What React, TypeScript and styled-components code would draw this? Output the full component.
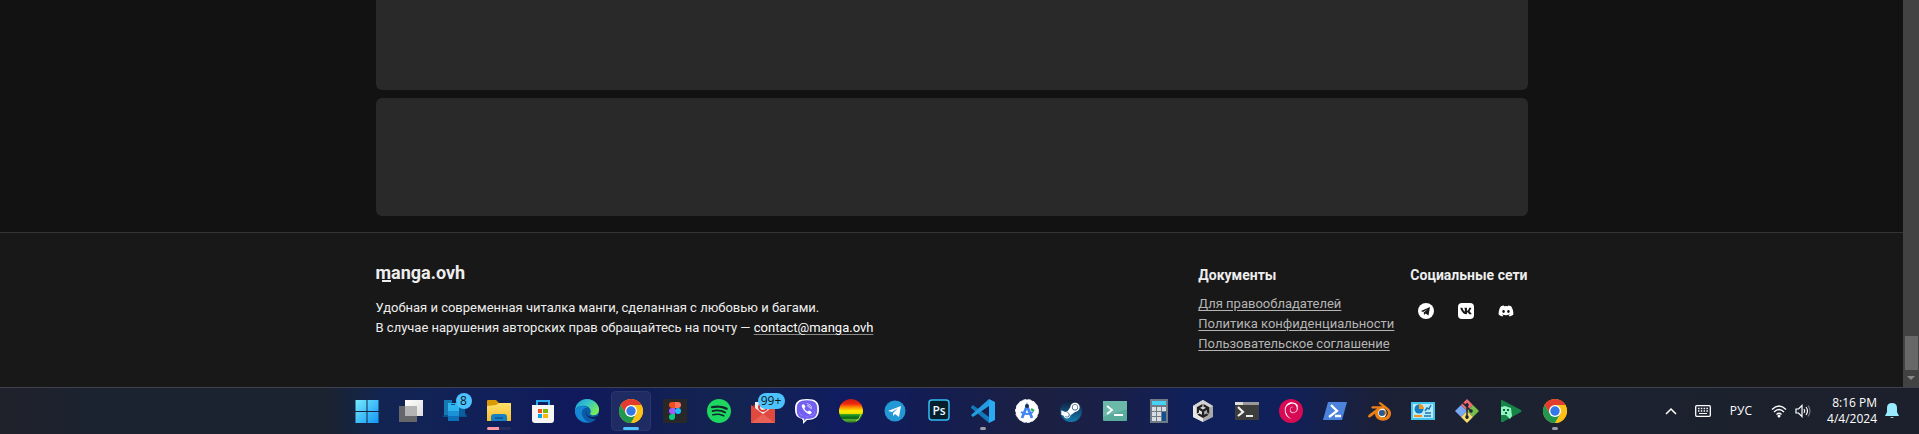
import React from 'react';
import styled, { createGlobalStyle } from 'styled-components';
import { FaDiscord, FaSteamSymbol, FaVk, FaViber } from 'react-icons/fa';
import { SiBlender, SiDebian, SiSpotify, SiUnity } from 'react-icons/si';

const GlobalStyle = createGlobalStyle`
  * { box-sizing: border-box; }
  html, body, #root { height: 100%; }
  body { margin: 0; background: #121212; color: #eeeeee; overflow: hidden; font-family: Roboto, sans-serif; }
  a { color: inherit; }
  svg { display: block; }
`;

const Screen = styled.div`
  display: flex;
  flex-direction: column;
  min-height: 100vh;
`;

const Viewport = styled.div`
  display: flex;
  flex: 1;
`;

const Page = styled.div`
  display: flex;
  flex: 1;
  flex-direction: column;
`;

const Container = styled.div`
  width: 100%;
  max-width: 1200px;
  margin: 0 auto;
  padding: 0 24px;
`;

const CardList = styled(Container).attrs({ as: 'main' })`
  display: flex;
  flex-direction: column;
  gap: 8px;
  padding-bottom: 16px;
`;

const Card = styled.section<{ $cut?: boolean }>`
  height: ${p => (p.$cut ? 90 : 118)}px;
  border-radius: ${p => (p.$cut ? '0 0 6px 6px' : '6px')};
  background: #292929;
`;

const Footer = styled.footer`
  flex: 1;
  border-top: 1px solid #333333;
  background: #181818;
`;

const FooterInner = styled(Container)`
  display: flex;
  justify-content: space-between;
  padding-top: 28px;
`;

const About = styled.div`
  font-size: 13px;
  line-height: 20px;
`;

const Brand = styled.h2`
  margin: 0 0 13px;
  font-size: 18px;
  line-height: 24px;
  font-weight: 700;
`;

const BrandMark = styled.span`
  position: relative;
  &::after {
    content: '';
    position: absolute;
    left: 6px;
    bottom: 1px;
    width: 9px;
    height: 2px;
    background: #eeeeee;
  }
`;

const Text = styled.p`
  margin: 0;
`;

const Columns = styled.div`
  display: flex;
  gap: 16px;
`;

const Column = styled.section``;

const ColumnTitle = styled.h3`
  margin: 4px 0 9px;
  font-size: 14px;
  line-height: 20px;
  font-weight: 700;
`;

const Links = styled.nav`
  display: flex;
  flex-direction: column;
  align-items: flex-start;
  font-size: 13px;
  line-height: 20px;
  color: #b4b4b4;
`;

const DocLink = styled.a`
  text-underline-offset: 2px;
`;

const MailLink = styled.a`
  color: #ffffff;
  text-decoration-color: #888888;
  text-underline-offset: 2px;
`;

const Socials = styled.div`
  display: flex;
  gap: 8px;
`;

const SocialLink = styled.a`
  display: flex;
  align-items: center;
  justify-content: center;
  width: 32px;
  height: 34px;
  color: #ffffff;
`;

const Scrollbar = styled.div`
  display: flex;
  flex-direction: column;
  justify-content: flex-end;
  align-items: center;
  gap: 6px;
  width: 16px;
  padding-bottom: 7px;
  background: #424242;
`;

const Thumb = styled.div`
  width: 13px;
  height: 34px;
  background: #686868;
`;

const Arrow = styled.div`
  border: 4px solid transparent;
  border-top-color: #888888;
  border-bottom: 0;
`;

const Taskbar = styled.div`
  display: grid;
  grid-template-columns: 1fr auto 1fr;
  height: 47px;
  border-top: 1px solid #40434e;
  background: linear-gradient(90deg, #20212b 0%, #1b2330 5%, #1b2330 17%, #122452 20%, #11205a 26%, #10195c 30%, #132450 38%, #101c60 44%, #141d50 49%, #1b2042 54%, #191f48 58%, #10205a 62%, #10205a 67%, #1c2036 72%, #1c2230 80%, #1c202c 100%);
`;

const Apps = styled.div`
  grid-column: 2;
  display: flex;
  align-items: center;
  gap: 4px;
  padding-left: 2px;
`;

const AppButton = styled.button<{ $active?: boolean }>`
  position: relative;
  display: flex;
  align-items: center;
  justify-content: center;
  width: 40px;
  height: 40px;
  padding: 0;
  border: 1px solid ${p => (p.$active ? '#29356b' : 'transparent')};
  border-radius: 4px;
  background: ${p => (p.$active ? '#1f2b63' : 'transparent')};
`;

const Badge = styled.span<{ $wide: boolean }>`
  position: absolute;
  top: 1px;
  right: ${p => (p.$wide ? -3 : 2)}px;
  width: ${p => (p.$wide ? 27 : 16)}px;
  border-radius: 8px;
  background: #4cc2ff;
  color: #101820;
  font: 12px/16px "Open Sans", sans-serif;
  text-align: center;
`;

const Running = styled.span<{ $kind: 'active' | 'idle' | 'progress' }>`
  position: absolute;
  bottom: 0;
  width: ${p => ({ active: 16, idle: 6, progress: 24 })[p.$kind]}px;
  height: 3px;
  border-radius: 2px;
  background: ${p => ({ active: '#4cc2ff', idle: '#9a9ca8', progress: 'linear-gradient(90deg, #ff99a4 50%, #232c5c 50%)' })[p.$kind]};
`;

const Tray = styled.div`
  grid-column: 3;
  display: flex;
  align-items: center;
  justify-content: flex-end;
  padding-right: 20px;
  color: #ffffff;
  font: 12px/16px "Open Sans", sans-serif;
`;

const TrayButton = styled.button<{ $gap: number }>`
  display: flex;
  gap: 8px;
  margin: 0 ${p => p.$gap}px 0 0;
  padding: 0;
  border: 0;
  background: none;
  color: inherit;
  font: inherit;
  text-align: right;
`;

const Clock = styled.time`
  white-space: pre-line;
`;

const ICONS: Record<string, React.ReactNode> = {
  start: <><defs><linearGradient id="st" x2="1" y2="1"><stop stopColor="#75eaff" /><stop offset="1" stopColor="#1296f5" /></linearGradient></defs><path fill="url(#st)" d="M.5 1h11v11H.5zM12.500 1h11v11h-11zM.5 13h11v11H.5zM12.500 13h11v11h-11z" /></>,
  tasks: <><defs><linearGradient id="tk" x2="1" y2="1"><stop stopColor="#fff" /><stop offset="1" stopColor="#ddd" /></linearGradient></defs><path fill="url(#tk)" d="M6 1h18v16H6z" /><path fill="#6c6c6c" opacity=".95" d="M0 7h18v16H0z" /><path fill="#b4b4b4" d="M6 7h12v10H6z" /></>,
  phone: <><path fill="#07538f" d="M0 17l2-3h20l2 3v1H0z" /><path fill="#1677b5" d="M1 1h8v15H1z" /><path fill="#0b5d9e" d="M15 6h7v11h-7z" /><path fill="#2fb4ee" d="M5 4h11v8H5z" /><path fill="#1b92d6" d="M5 12h11v5H5z" /><path fill="#0f6fb9" d="M5 17h11v5H5z" /><path stroke="#0b4a80" d="M8 5.500h4" /></>,
  folder: <><path fill="#d99a06" d="M0 2q0-1 1-1h8l3 3v5H0z" /><defs><linearGradient id="fo" x2="0" y2="1"><stop stopColor="#ffe16b" /><stop offset="1" stopColor="#f9bd2b" /></linearGradient></defs><path fill="url(#fo)" d="M0 7l9-1 3-2h12v18H0z" /><path fill="#1a80c4" d="M4 22v-4q0-3 3-3h10q3 0 3 3v4z" /><path fill="#0a5f9f" d="M8 18h8v2H8z" /></>,
  store: <><path fill="none" stroke="#29aaf0" strokeWidth="2" d="M6 7V2h12v5" /><path fill="#f5f5f5" d="M1 6h22v15q0 3-3 3H4q-3 0-3-3z" /><path fill="#f25022" d="M7 10h4v4H7z" /><path fill="#7fba00" d="M12 10h5v4h-5z" /><path fill="#00a4ef" d="M7 15h4v4H7z" /><path fill="#ffb900" d="M12 15h5v4h-5z" /></>,
  edge: <><defs><linearGradient id="ed" x2="1" y2=".6"><stop stopColor="#1e98df" /><stop offset=".5" stopColor="#35c4c9" /><stop offset="1" stopColor="#78ed57" /></linearGradient></defs><circle cx="12" cy="12" r="12" fill="#0b5ca8" /><path fill="url(#ed)" d="M0 11C1 4 6 0 12 0c8 0 13 7 12 12-1 5-7 5-9 3 2-3 0-7-4-8C6 6 2 7 0 11z" /><path fill="#1587d4" d="M0 11c3-5 10-5 13-2-5-1-8 4-5 9 2 4 5 5 7 5C6 25-1 18 0 11z" /><path fill="#10205a" d="M12 11c-3 4 2 9 10 6l3-1v3l-3 1C14 21 8 15 12 11z" /></>,
  chrome: <><circle cx="12" cy="12" r="12" fill="#fbc116" /><path fill="#e33b2e" d="M1.600 6a12 12 0 0 1 20.800 0H12L7 15z" /><path fill="#21984f" d="M1.600 6a12 12 0 0 0 10.400 18l5.200-9L12 17l-5-2z" /><path fill="#fbc116" d="M12 6h10.400A12 12 0 0 1 12 24l5.200-9z" /><circle cx="12" cy="12" r="6" fill="#fff" /><circle cx="12" cy="12" r="4.700" fill="#3478e8" /></>,
  figma: <><rect width="24" height="24" rx="1" fill="#282828" /><path fill="#f24e1e" d="M12 3H9a3 3 0 0 0 0 6h3z" /><path fill="#ff7262" d="M12 3h3a3 3 0 0 1 0 6h-3z" /><path fill="#a259ff" d="M12 9H9a3 3 0 0 0 0 6h3z" /><circle cx="15" cy="12" r="3" fill="#1abcfe" /><path fill="#0acf83" d="M12 15H9a3 3 0 1 0 3 3z" /></>,
  spotify: <><circle cx="12" cy="12" r="11" fill="#10262c" /><SiSpotify size={24} color="#1ed760" /></>,
  mail: <><path fill="#ba2d29" d="M0 8l12-8 12 8v14H0z" /><path fill="#eee" d="M4 3h16v13H4z" /><circle cx="12" cy="8" r="4" fill="none" stroke="#d33" strokeWidth="2" /><path fill="#df493e" d="M0 6l12 9 12-9v18H0z" /><path fill="#f3776b" d="M0 24l12-9 12 9z" opacity=".5" /></>,
  viber: <><path fill="#fff" d="M12 0c9 0 12 3 12 10s-3 11-12 11l-4 4v-5C2 19 0 16 0 10 0 3 3 0 12 0z" /><path fill="#7360f2" d="M12 2c7 0 10 2 10 8s-3 9-10 9l-3 3v-4c-5-1-7-3-7-8 0-6 3-8 10-8z" /><FaViber x="2" y="1" size={20} color="#fff" /><path fill="none" stroke="#7360f2" strokeWidth="2.500" d="M12 2.500c7 0 9 2 9 8s-2 8-9 8-9-2-9-8 2-8 9-8z" /></>,
  rainbow: <><defs><linearGradient id="rb" x2="0" y2="1"><stop stopColor="#c51c13" /><stop offset=".2" stopColor="#f02510" /><stop offset=".35" stopColor="#ff9000" /><stop offset=".5" stopColor="#fff000" /><stop offset=".61" stopColor="#e9e000" /><stop offset=".65" stopColor="#279c24" /><stop offset=".8" stopColor="#075f1b" /><stop offset=".87" stopColor="#62bd31" /><stop offset="1" stopColor="#174d22" /></linearGradient></defs><circle cx="12" cy="12" r="12" fill="url(#rb)" /><path d="M22 15q-1 5-5 7" fill="none" stroke="#b7df5b" /></>,
  telegram: <><circle cx="12" cy="12" r="10.500" fill="#2299d4" /><path fill="#fff" d="M5 12l13-5-2 11-4-3-2 2v-3l5-5-6 4z" /></>,
  photoshop: <><rect x="2" y="1" width="20" height="20" rx="3" fill="#041e2c" stroke="#31bff5" strokeWidth="1.500" /><text x="12" y="16" textAnchor="middle" fill="#e7f9ff" fontFamily="Open Sans, sans-serif" fontSize="12" fontWeight="600">Ps</text></>,
  vscode: <><path fill="#1478bd" d="M0 8l2-2 16 12v6L0 9z" /><path fill="#249de0" d="M0 16l18-16v7L2 18z" /><path fill="#2aaaf3" d="M18 0l6 3v18l-6 3z" /></>,
  android: <><circle cx="12" cy="12" r="11.500" fill="#fff" stroke="#dfe8ee" strokeDasharray="3 2" /><path fill="none" stroke="#4285f4" strokeWidth="2.800" d="M7 19l5-12 5 12" /><path fill="none" stroke="#4285f4" strokeWidth="2" d="M6 13q6 4 12 0" /><path stroke="#36ae61" strokeWidth="2.500" d="M16 10l3 2" /><circle cx="12" cy="7" r="2" fill="#17324d" /></>,
  steam: <><defs><linearGradient id="sm" x2="0" y2="1"><stop stopColor="#111a38" /><stop offset="1" stopColor="#137cb0" /></linearGradient></defs><circle cx="12" cy="12" r="11" fill="url(#sm)" /><FaSteamSymbol x="1" y="1" size={21} color="#fff" /></>,
  termgreen: <><rect y="2" width="24" height="20" rx="1" fill="#59ac9b" /><path fill="#6cb9a9" d="M0 2h24v8L0 18z" /><path fill="none" stroke="#fff" strokeWidth="1.800" d="M4 7l5 4-5 4M11 16h9" /></>,
  calc: <><rect x="3" width="18" height="24" fill="#707b85" /><path fill="#45d2f5" d="M5 2h14v4H5z" /><path fill="#d7dde2" d="M5 8h4v4H5zM10 8h4v4h-4zM15 8h4v4h-4zM5 13h4v4H5zM10 13h4v4h-4zM5 18h4v4H5zM10 18h4v4h-4z" /><path fill="#154f91" d="M15 13h4v9h-4z" /></>,
  unity: <><path fill="#a9a9a9" d="M12 1l10 6v11l-10 5-10-5V7z" /><path fill="#e8e8e8" d="M12 1v22L2 18V7z" /><path fill="#d2d2d2" d="M12 1l10 6-10 4L2 7z" /><SiUnity x="5" y="5" size={14} color="#202020" /></>,
  console: <><path fill="#3d3d3d" d="M0 3h24v18H0z" /><path fill="#999" d="M0 3h24v3H0z" /><path fill="#ddd" d="M0 3h8v3H0z" /><path fill="none" stroke="#eee" strokeWidth="2.200" d="M3 8l5 5-5 4M11 17h7" /></>,
  debian: <><circle cx="12" cy="12" r="12" fill="#d70a53" /><SiDebian x="4" y="3" size={17} color="#fff" /></>,
  powershell: <><path fill="#4b82dc" d="M5 3h19l-5 18H0z" /><path fill="none" stroke="#fff" strokeWidth="2.300" d="M8 6l6 6-8 6M12 17h6" /></>,
  blender: <><circle cx="14.500" cy="14" r="5" fill="#fff" /><SiBlender x="1" y="1" size={23} color="#ec8015" /><circle cx="14.800" cy="14" r="3" fill="#235b94" /></>,
  panel: <><path fill="#43c5ee" d="M0 3h24v18H0z" /><path fill="#b9eafa" d="M2 5h20v14H2z" /><circle cx="8" cy="10" r="4.500" fill="#127cc5" /><path fill="#f49320" d="M8 10V5a5 5 0 0 1 5 5zM3 16h8v2H3z" /><path stroke="#167ab3" strokeWidth="1.500" d="M14 12l2-3 2 1 2-4M14 14h6M13 17h7" fill="none" /></>,
  git: <><path fill="#f06b70" d="M12 0l6 6-6 6-6-6z" /><path fill="#77a8f4" d="M6 6l6 6-6 6-6-6z" /><path fill="#78bd4c" d="M18 6l6 6-6 6-6-6z" /><path fill="#f3dc72" d="M12 12l6 6-6 6-6-6z" /><path stroke="#202331" strokeWidth="1.500" d="M12 4v16M8 4l8 8" /><circle cx="12" cy="6" r="1.800" fill="#202331" /><circle cx="16" cy="12" r="1.800" fill="#202331" /><circle cx="12" cy="18" r="1.800" fill="#202331" /></>,
  games: <><path fill="#168347" d="M2 1q1 0 3 1l17 9q1 1 0 2L4 23H2z" /><path fill="#8df5bd" d="M2 8l4-1 6 2 1 8-2 3-4-4H2z" /><path fill="#14623a" d="M4 10h2v2H4zM8 10h2v2H8zM6 13h2v2H6z" /></>,
};

type TaskApp = { icon: string; label: string; badge?: string; running?: 'active' | 'idle' | 'progress' };

const APPS: TaskApp[] = [
  { icon: 'start', label: 'Start' },
  { icon: 'tasks', label: 'Task View' },
  { icon: 'phone', label: 'Phone Link', badge: '8' },
  { icon: 'folder', label: 'File Explorer', running: 'progress' },
  { icon: 'store', label: 'Microsoft Store' },
  { icon: 'edge', label: 'Edge' },
  { icon: 'chrome', label: 'Chrome', running: 'active' },
  { icon: 'figma', label: 'Figma' },
  { icon: 'spotify', label: 'Spotify' },
  { icon: 'mail', label: 'Mail', badge: '99+' },
  { icon: 'viber', label: 'Viber' },
  { icon: 'rainbow', label: 'Rainbow' },
  { icon: 'telegram', label: 'Telegram' },
  { icon: 'photoshop', label: 'Photoshop' },
  { icon: 'vscode', label: 'Visual Studio Code', running: 'idle' },
  { icon: 'android', label: 'Android Studio' },
  { icon: 'steam', label: 'Steam' },
  { icon: 'termgreen', label: 'Terminal' },
  { icon: 'calc', label: 'Calculator' },
  { icon: 'unity', label: 'Unity' },
  { icon: 'console', label: 'Console' },
  { icon: 'debian', label: 'Debian' },
  { icon: 'powershell', label: 'PowerShell' },
  { icon: 'blender', label: 'Blender' },
  { icon: 'panel', label: 'Control Panel' },
  { icon: 'git', label: 'Git' },
  { icon: 'games', label: 'Play Games' },
  { icon: 'chrome', label: 'Chrome profile', running: 'idle' },
];

export default function App() {
  return (
    <Screen>
      <GlobalStyle />
      <Viewport>
        <Page>
          <CardList>
            <Card $cut />
            <Card />
          </CardList>
          <Footer>
            <FooterInner>
              <About>
                <Brand><BrandMark>m</BrandMark>anga.ovh</Brand>
                <Text>Удобная и современная читалка манги, сделанная с любовью и багами.</Text>
                <Text>В случае нарушения авторских прав обращайтесь на почту — <MailLink href="mailto:contact@manga.ovh">contact@manga.ovh</MailLink></Text>
              </About>
              <Columns>
                <Column>
                  <ColumnTitle>Документы</ColumnTitle>
                  <Links>
                    <DocLink href="#rights">Для правообладателей</DocLink>
                    <DocLink href="#privacy">Политика конфиденциальности</DocLink>
                    <DocLink href="#terms">Пользовательское соглашение</DocLink>
                  </Links>
                </Column>
                <Column>
                  <ColumnTitle>Социальные сети</ColumnTitle>
                  <Socials>
                    <SocialLink href="#telegram" aria-label="Telegram">
                      <svg width="16" height="16" viewBox="0 0 16 16"><circle cx="8" cy="8" r="8" fill="#fff" /><path fill="#181818" d="M3 8l9-4-1.500 8.500-3-2-1.500 1.500-.3-2.500L10 6 5 9z" /></svg>
                    </SocialLink>
                    <SocialLink href="#vk" aria-label="VK">
                      <svg width="16" height="16" viewBox="0 0 16 16"><rect width="16" height="16" rx="4" fill="#fff" /><FaVk x="2" y="2" size={12} color="#181818" /></svg>
                    </SocialLink>
                    <SocialLink href="#discord" aria-label="Discord"><FaDiscord size={16} /></SocialLink>
                  </Socials>
                </Column>
              </Columns>
            </FooterInner>
          </Footer>
        </Page>
        <Scrollbar><Thumb /><Arrow /></Scrollbar>
      </Viewport>
      <Taskbar>
        <Apps>
          {APPS.map(app => (
            <AppButton key={app.label} aria-label={app.label} $active={app.running === 'active'}>
              <svg width="24" height="24" viewBox="0 0 24 24" overflow="visible">{ICONS[app.icon]}</svg>
              {app.badge && <Badge $wide={app.badge.length > 1}>{app.badge}</Badge>}
              {app.running && <Running $kind={app.running} />}
            </AppButton>
          ))}
        </Apps>
        <Tray>
          <TrayButton $gap={18} aria-label="Hidden icons">
            <svg width="12" height="12" viewBox="0 0 12 12"><path fill="none" stroke="#fff" strokeWidth="1.500" d="M1 9l5-5 5 5" /></svg>
          </TrayButton>
          <TrayButton $gap={19} aria-label="Touch keyboard">
            <svg width="16" height="12" viewBox="0 0 16 12"><rect x=".7" y=".7" width="14.600" height="10.600" rx="1" fill="none" stroke="#fff" strokeWidth="1.300" /><path stroke="#fff" strokeWidth="1.300" strokeDasharray="1.500 1.300" d="M3 3.500h10M3 6h10" /><path stroke="#fff" d="M4 8.500h8" /></svg>
          </TrayButton>
          <TrayButton $gap={19}>РУС</TrayButton>
          <TrayButton $gap={16} aria-label="Network and volume">
            <svg width="16" height="14" viewBox="0 0 16 14"><path fill="none" stroke="#fff" strokeWidth="1.300" d="M1 5.500q7-7 14 0M3 8q5-5 10 0M5.500 10.500q2.500-2.500 5 0" /><circle cx="8" cy="12" r="1.500" fill="#fff" /></svg>
            <svg width="16" height="14" viewBox="0 0 16 14"><path fill="none" stroke="#fff" strokeWidth="1.200" d="M1 5h2.500L7 1.500v11L3.500 9H1zM9 5q1.500 2 0 4M11 3q3 4 0 8" /><path fill="none" stroke="#777b85" strokeWidth="1.200" d="M13 1.500q4 5.500 0 11" /></svg>
          </TrayButton>
          <TrayButton $gap={8}><Clock>{'8:16 PM\n4/4/2024'}</Clock></TrayButton>
          <svg width="14" height="16" viewBox="0 0 14 16"><path fill="#99ebff" d="M7 0q5 0 5 5v4l2 4H0l2-4V5q0-5 5-5zM5 14h4q-2 2-4 0z" /></svg>
        </Tray>
      </Taskbar>
    </Screen>
  );
}
